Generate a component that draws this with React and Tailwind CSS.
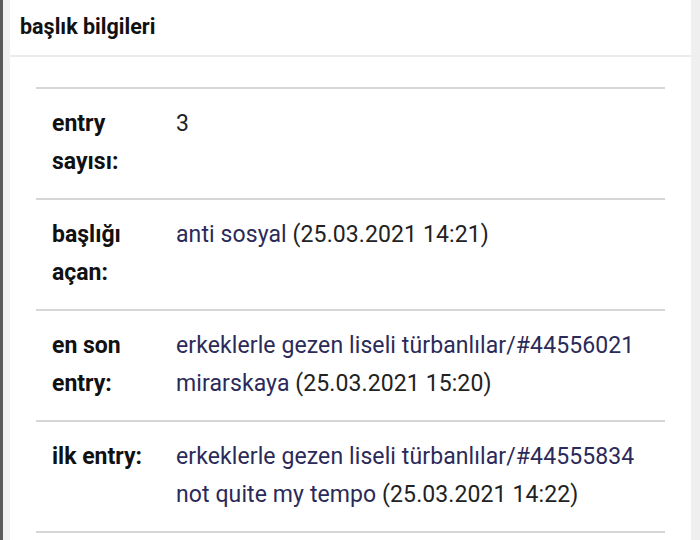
export default function App() {
  const rows = [
    { label: ["entry", "sayısı:"], value: [<span key="a" className="text-[#222]">3</span>] },
    {
      label: ["başlığı", "açan:"],
      value: [
        <span key="a">
          <span className="text-[#2b2a58]">anti sosyal</span>
          <span className="text-[#222]"> (25.03.2021 14:21)</span>
        </span>,
      ],
    },
    {
      label: ["en son", "entry:"],
      value: [
        <span key="a" className="block text-[#2b2a58]">erkeklerle gezen liseli türbanlılar/#44556021</span>,
        <span key="b" className="block">
          <span className="text-[#2b2a58]">mirarskaya</span>
          <span className="text-[#222]"> (25.03.2021 15:20)</span>
        </span>,
      ],
    },
    {
      label: ["ilk entry:"],
      value: [
        <span key="a" className="block text-[#2b2a58]">erkeklerle gezen liseli türbanlılar/#44555834</span>,
        <span key="b" className="block">
          <span className="text-[#2b2a58]">not quite my tempo</span>
          <span className="text-[#222]"> (25.03.2021 14:22)</span>
        </span>,
      ],
    },
  ];
  return (
    <div
      className="w-[700px] h-[540px] overflow-hidden flex bg-[#efefef]"
      style={{ fontFamily: "Roboto, 'Noto Sans', sans-serif" }}
    >
      <div className="w-[3px] bg-[#5a5a5a] shrink-0" />
      <div className="w-[7px] bg-[#f0f0f0] shrink-0" />
      <div className="w-[681px] bg-white shrink-0 flex flex-col">
        <div className="h-[57px] border-b-2 border-[#ebebeb] flex items-center pl-[10px]">
          <span className="text-[21.5px] font-bold text-[#111]">başlık bilgileri</span>
        </div>
        <div className="pt-[30px] pl-[26px] pr-[25px]">
          <div className="w-[629px] border-b-2 border-[#d6d6d6]">
            {rows.map((r, i) => (
              <div key={i} className="flex border-t-2 border-[#d6d6d6] py-[16px] min-h-[111px]">
                <div className="w-[140px] shrink-0 pl-[16px] text-[23px] leading-[38px] font-bold text-[#111]">
                  {r.label.map((l, j) => (
                    <div key={j}>{l}</div>
                  ))}
                </div>
                <div className="flex-1 text-[23px] leading-[38px] tracking-[0.1px] whitespace-nowrap">{r.value}</div>
              </div>
            ))}
          </div>
        </div>
      </div>
      <div className="flex-1 bg-[#efefef]" />
    </div>
  );
}
